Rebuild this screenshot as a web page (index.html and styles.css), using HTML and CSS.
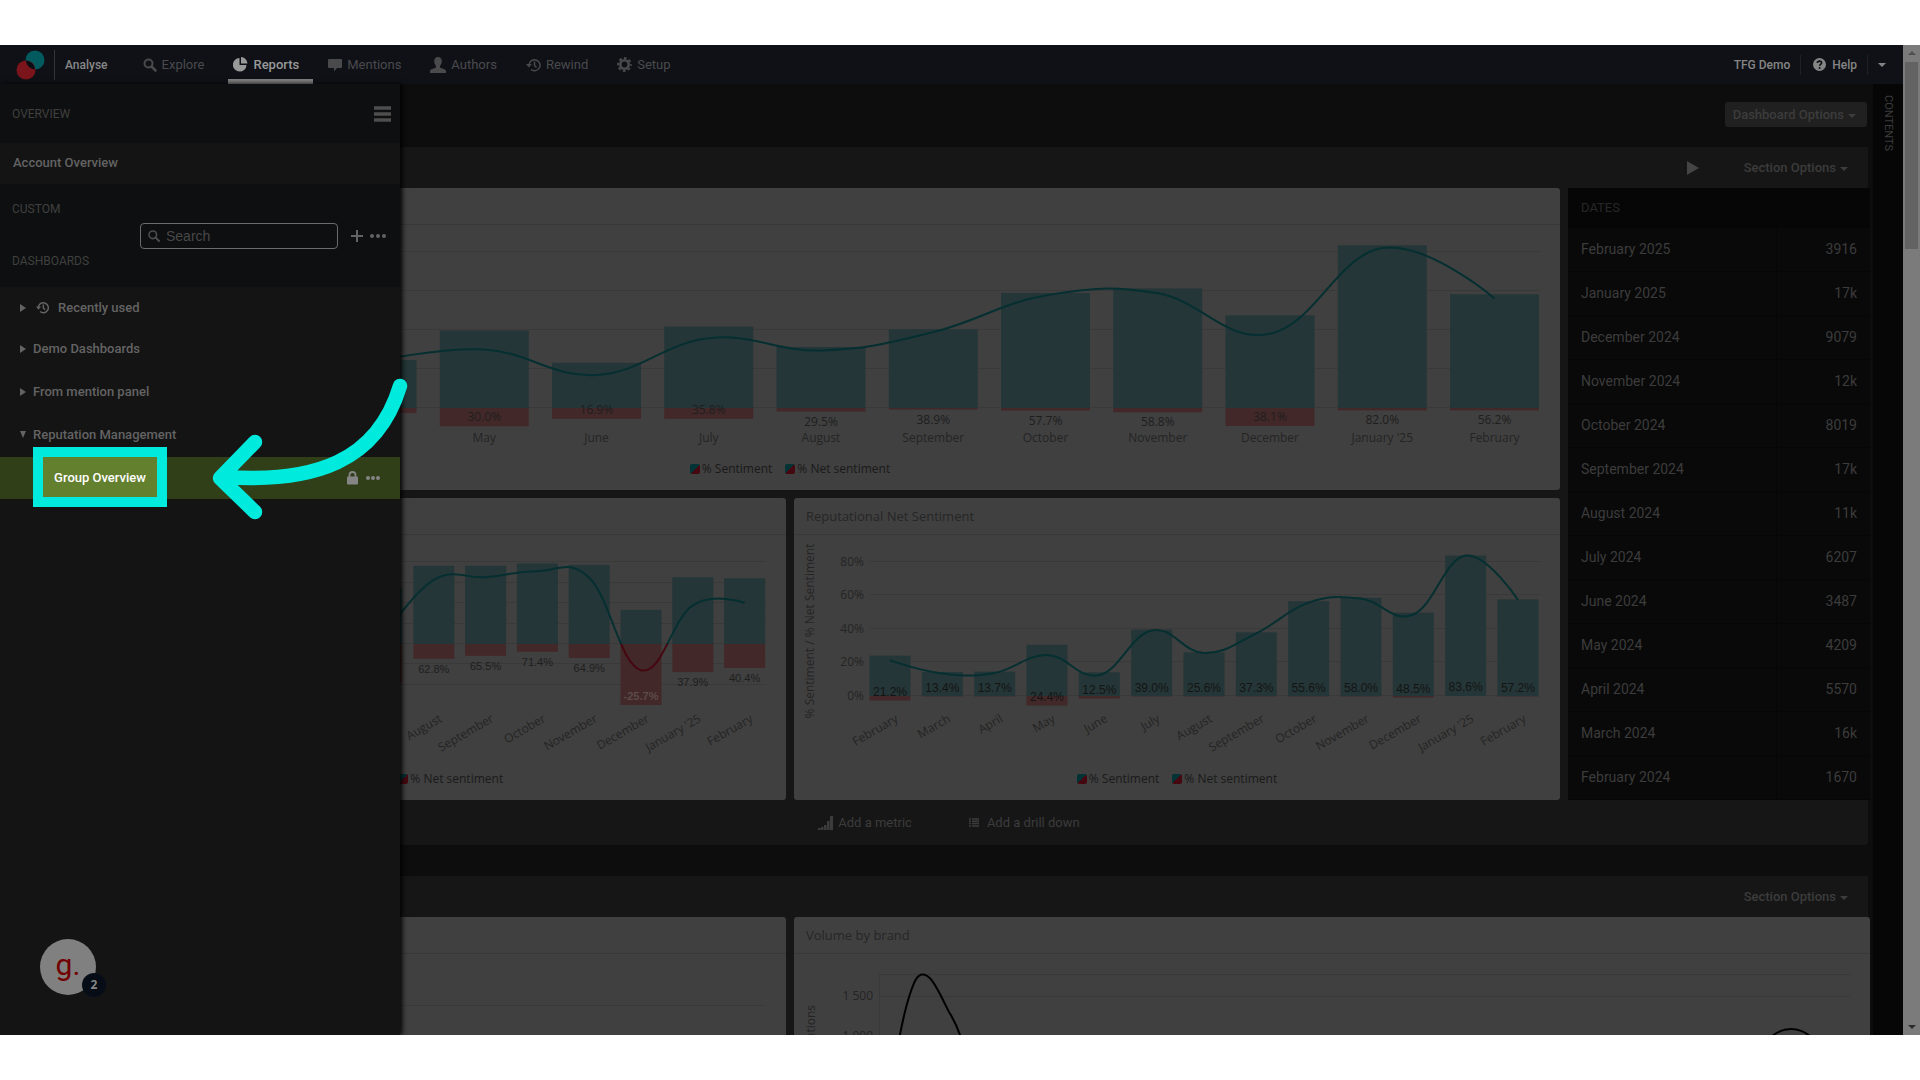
FILE: index.html
```html
<!DOCTYPE html>
<html lang="en">
<head>
    <meta charset="UTF-8">
    <title>Reports</title>
    <link rel="stylesheet" href="styles.css">
</head>
<body>

<div class="frame">
    <div class="app">
        <header class="topnav">
            <a href="#" class="logo" aria-label="Home">
                <svg width="30" height="30" viewBox="0 0 30 30">
                    <circle cx="19" cy="10" r="9.5" fill="#005a5e"/>
                    <circle cx="10" cy="20" r="9.5" fill="#7c141b"/>
                    <path d="M9.9 10.500A9.500 9.500 0 0 1 19.100 19.500A9.500 9.500 0 0 1 9.900 10.500Z" fill="#0c0d12"/>
                </svg>
            </a>
            <span class="product">Analyse</span>
            <nav class="tabs">
                <a href="#" class="tab">
                    <svg width="14" height="14" viewBox="0 0 14 14"><circle cx="5.500" cy="5.500" r="4" fill="none" stroke="currentColor" stroke-width="2"/><path d="M8.500 8.500L12.500 12.500" stroke="currentColor" stroke-width="2.500" stroke-linecap="round"/></svg>
                    Explore
                </a>
                <a href="#" class="tab active">
                    <svg width="15" height="15" viewBox="0 0 15 15"><path d="M6.500 1V8H13.500A6.800 6.800 0 1 1 6.500 1Z M8 0A7 7 0 0 1 14.500 6.500H8Z" fill="currentColor"/></svg>
                    Reports
                </a>
                <a href="#" class="tab">
                    <svg width="14" height="14" viewBox="0 0 14 14"><path d="M1 1H13Q14 1 14 2V9Q14 10 13 10H9L6 13.500V10H1Q0 10 0 9V2Q0 1 1 1Z" fill="currentColor"/></svg>
                    Mentions
                </a>
                <a href="#" class="tab">
                    <svg width="16" height="16" viewBox="0 0 16 16"><path d="M8 0C10.500 0 11.800 1.800 11.800 4.300C11.800 6.500 10.800 8 10 9V10.500C11.500 11.500 16 12 16 14.200V16H0V14.200C0 12 4.500 11.500 6 10.500V9C5.200 8 4.200 6.500 4.200 4.300C4.200 1.800 5.500 0 8 0Z" fill="currentColor"/></svg>
                    Authors
                </a>
                <a href="#" class="tab">
                    <svg width="15" height="14" viewBox="0 0 15 14"><path d="M3 7A5.500 5.500 0 1 1 5 11.500" fill="none" stroke="currentColor" stroke-width="1.500"/><path d="M0 6H5.800L2.900 9.500Z" fill="currentColor"/><path d="M8.500 3.500V7.500L10.500 9.500" fill="none" stroke="currentColor" stroke-width="1.500"/></svg>
                    Rewind
                </a>
                <a href="#" class="tab">
                    <svg width="15" height="15" viewBox="0 0 15 15"><circle cx="7.500" cy="7.500" r="4.200" fill="none" stroke="currentColor" stroke-width="2.600"/><circle cx="7.500" cy="7.500" r="6.400" fill="none" stroke="currentColor" stroke-width="2" stroke-dasharray="2.700 2.327" stroke-dashoffset="1.350"/></svg>
                    Setup
                </a>
            </nav>
            <div class="account">
                <a href="#" class="account-item">TFG Demo</a>
                <a href="#" class="account-item">
                    <svg width="13" height="13" viewBox="0 0 13 13"><circle cx="6.500" cy="6.500" r="6.500" fill="currentColor"/><path d="M4.400 5C4.400 2.400 8.600 2.500 8.600 4.900C8.600 6.300 6.600 6.400 6.600 7.700" fill="none" stroke="#0f1117" stroke-width="1.600"/><circle cx="6.600" cy="9.900" r="1" fill="#0f1117"/></svg>
                    Help
                </a>
                <button class="account-more" aria-label="More"><span class="caret"></span></button>
            </div>
        </header>

        <div class="workspace">
            <aside class="sidebar">
                <div class="side-head">
                    <span>OVERVIEW</span>
                    <button class="icon-btn burger" aria-label="Menu">
                        <svg width="17" height="16" viewBox="0 0 17 16"><path d="M0 2H17M0 8H17M0 14H17" stroke="currentColor" stroke-width="3.500"/></svg>
                    </button>
                </div>
                <a href="#" class="side-account">Account Overview</a>
                <div class="side-tools">
                    <div class="side-label">CUSTOM</div>
                    <div class="side-search">
                        <label class="search-box">
                            <svg width="12" height="12" viewBox="0 0 12 12"><circle cx="4.800" cy="4.800" r="3.800" fill="none" stroke="currentColor" stroke-width="1.600"/><path d="M7.600 7.600L11 11" stroke="currentColor" stroke-width="2" stroke-linecap="round"/></svg>
                            <input type="text" placeholder="Search" aria-label="Search">
                        </label>
                        <button class="icon-btn" aria-label="Add">
                            <svg width="12" height="12" viewBox="0 0 12 12"><path d="M6 0V12M0 6H12" stroke="currentColor" stroke-width="2"/></svg>
                        </button>
                        <button class="icon-btn" aria-label="More">
                            <svg width="16" height="4" viewBox="0 0 16 4"><circle cx="2" cy="2" r="2" fill="currentColor"/><circle cx="8" cy="2" r="2" fill="currentColor"/><circle cx="14" cy="2" r="2" fill="currentColor"/></svg>
                        </button>
                    </div>
                    <div class="side-label">DASHBOARDS</div>
                </div>
                <div class="folders">
                    <a href="#" class="folder recent">
                        <span class="arrow-right"></span>
                        <svg class="clock" width="13" height="13" viewBox="0 0 13 13"><path d="M2.300 6.500A5 5 0 1 1 4 10.500" fill="none" stroke="currentColor" stroke-width="1.500"/><path d="M0 5.500H5L2.500 8.800Z" fill="currentColor"/><path d="M7.300 3.500V7L9.200 8.800" fill="none" stroke="currentColor" stroke-width="1.400"/></svg>
                        Recently used
                    </a>
                    <a href="#" class="folder"><span class="arrow-right"></span>Demo Dashboards</a>
                    <a href="#" class="folder"><span class="arrow-right"></span>From mention panel</a>
                    <a href="#" class="folder"><span class="arrow-down"></span>Reputation Management</a>
                </div>
                <div class="dashboard-row">
                    <a href="#" class="spotlight">Group Overview</a>
                    <div class="row-actions">
                        <svg width="11" height="14" viewBox="0 0 11 14"><path d="M2.500 6V4A3 3 0 0 1 8.500 4V6" fill="none" stroke="currentColor" stroke-width="1.800"/><rect y="5.500" width="11" height="8" rx="1" fill="currentColor"/></svg>
                        <button class="icon-btn" aria-label="More">
                            <svg width="14" height="4" viewBox="0 0 14 4"><circle cx="2" cy="2" r="2" fill="currentColor"/><circle cx="7" cy="2" r="2" fill="currentColor"/><circle cx="12" cy="2" r="2" fill="currentColor"/></svg>
                        </button>
                    </div>
                    <svg class="pointer" width="200" height="150" viewBox="210 375 200 150">
                        <path d="M400 386C377 462 314 483 225 477M255 442L220 478L255 512" fill="none" stroke="#00ebdd" stroke-width="14.500" stroke-linecap="round" stroke-linejoin="round"/>
                    </svg>
                </div>
                <button class="guide">g.<span class="guide-count">2</span></button>
            </aside>

            <main class="main">
                <div class="dash-bar">
                    <button class="dash-options">Dashboard Options<span class="caret"></span></button>
                </div>

                <section class="section">
                    <div class="section-bar">
                        <button class="icon-btn play" aria-label="Play"><span></span></button>
                        <button class="section-options">Section Options<span class="caret"></span></button>
                    </div>
                    <div class="section-grid">
                        <div class="cards">
                            <article class="card wide">
                                <h2></h2>
                                <svg class="chart" id="sentimentChart" viewBox="0 0 1540 232"></svg>
                                <div class="legend"><span>% Sentiment</span><span>% Net sentiment</span></div>
                            </article>
                            <article class="card">
                                <h2></h2>
                                <svg class="chart" id="brandChart" viewBox="0 0 766 232"></svg>
                                <div class="legend"><span>% Sentiment</span><span>% Net sentiment</span></div>
                            </article>
                            <article class="card">
                                <h2>Reputational Net Sentiment</h2>
                                <svg class="chart" id="reputationChart" viewBox="0 0 766 232"></svg>
                                <div class="legend"><span>% Sentiment</span><span>% Net sentiment</span></div>
                            </article>
                        </div>
                        <table class="dates">
                            <thead><tr><th colspan="2">DATES</th></tr></thead>
                            <tbody>
                                <tr><td>February 2025</td><td>3916</td></tr>
                                <tr><td>January 2025</td><td>17k</td></tr>
                                <tr><td>December 2024</td><td>9079</td></tr>
                                <tr><td>November 2024</td><td>12k</td></tr>
                                <tr><td>October 2024</td><td>8019</td></tr>
                                <tr><td>September 2024</td><td>17k</td></tr>
                                <tr><td>August 2024</td><td>11k</td></tr>
                                <tr><td>July 2024</td><td>6207</td></tr>
                                <tr><td>June 2024</td><td>3487</td></tr>
                                <tr><td>May 2024</td><td>4209</td></tr>
                                <tr><td>April 2024</td><td>5570</td></tr>
                                <tr><td>March 2024</td><td>16k</td></tr>
                                <tr><td>February 2024</td><td>1670</td></tr>
                            </tbody>
                        </table>
                    </div>
                    <div class="section-foot">
                        <button class="add">
                            <svg width="15" height="14" viewBox="0 0 15 14"><path d="M0 12H2.500V14H0ZM3 11H5.500V14H3ZM6 9H8.500V14H6ZM9 5H11.500V14H9ZM12 0H15V14H12Z" fill="currentColor"/></svg>
                            Add a metric
                        </button>
                        <button class="add drill">
                            <svg width="10" height="9" viewBox="0 0 10 9"><path d="M0 1H2M3 1H10M0 3.300H2M3 3.300H10M0 5.600H2M3 5.600H10M0 8H2M3 8H10" stroke="currentColor" stroke-width="1.500"/></svg>
                            Add a drill down
                        </button>
                    </div>
                </section>

                <section class="section">
                    <div class="section-bar">
                        <button class="section-options">Section Options<span class="caret"></span></button>
                    </div>
                    <div class="volume-grid">
                        <article class="card">
                            <h2></h2>
                            <svg class="chart" viewBox="0 0 766 232"><path class="grid" d="M60 51.500H746"/></svg>
                        </article>
                        <article class="card">
                            <h2>Volume by brand</h2>
                            <svg class="chart" viewBox="0 0 1076 232">
                                <path class="grid" d="M85.500 20.500H1056M85.500 42.500H1056M85.500 20.500V200"/>
                                <text class="axis" x="79" y="46" text-anchor="end">1 500</text>
                                <text class="axis" x="79" y="86" text-anchor="end">1 000</text>
                                <text class="axis" transform="translate(21 51) rotate(-90)" text-anchor="end">Mentions</text>
                                <path class="volume" d="M98 120L105.700 82C109 65 114 46 116 40C120 28 123 20.500 128.500 20.500C136 20.500 141 31 146 40L155 58C160 66 163 72 166 81L174 105"/>
                                <path class="volume" d="M966 96C984 68 1010 68 1028 96"/>
                            </svg>
                        </article>
                    </div>
                </section>
            </main>
            <button class="contents">CONTENTS</button>
        </div>
    </div>
    <div class="scrollbar">
        <span class="scroll-up"></span>
        <span class="scroll-thumb"></span>
        <span class="scroll-down"></span>
    </div>
</div>

<script src="charts.js"></script>
</body>
</html>
```
FILE: styles.css
```css
* {
    box-sizing: border-box;
}
body {
    margin: 0;
    padding: 45px 0;
    background: #fff;
    font-family: Roboto, sans-serif;
    font-size: 14px;
    color: #3c3c3c;
}
a {
    color: inherit;
    text-decoration: none;
}
button {
    font: inherit;
    color: inherit;
    background: none;
    border: none;
    padding: 0;
    cursor: pointer;
}
svg {
    display: block;
    flex: none;
}
.frame {
    display: flex;
    height: calc(100vh - 90px);
    overflow: hidden;
    background: #0d0d0d;
}
.app {
    flex: 1;
    min-width: 0;
    display: flex;
    flex-direction: column;
}
.icon-btn {
    display: flex;
}
.caret {
    display: inline-block;
    border: 4px solid transparent;
    border-top-color: currentColor;
    border-bottom: 0;
    margin-left: 4px;
    vertical-align: middle;
}

/* top navigation */
.topnav {
    display: flex;
    align-items: center;
    height: 39px;
    flex: none;
    background: #0f1117;
    font-size: 13px;
}
.logo {
    padding: 0 8px 0 16px;
    border-right: 1px solid #33343a;
}
.product {
    padding: 0 30px 0 10px;
    color: #878787;
    font-size: 12px;
    font-weight: 500;
}
.tabs {
    display: flex;
    gap: 10px;
    height: 100%;
}
.tab {
    display: flex;
    align-items: center;
    gap: 5px;
    padding: 5px 14px 0 5px;
    border-bottom: 5px solid transparent;
    color: #4a4a4c;
}
.tab.active {
    color: #999;
    font-weight: 500;
    border-color: #808080;
}
.account {
    display: flex;
    align-items: center;
    margin-left: auto;
    color: #858585;
    font-size: 12px;
    font-weight: 500;
}
.account-item {
    display: flex;
    align-items: center;
    gap: 6px;
    height: 20px;
    padding: 0 10px 0 12px;
    border-right: 1px solid #1e2026;
}
.account-more {
    padding: 0 17px 0 6px;
}

/* sidebar */
.workspace {
    flex: 1;
    min-height: 0;
    display: flex;
    position: relative;
}
.sidebar {
    position: absolute;
    top: 0;
    bottom: 0;
    left: 0;
    z-index: 2;
    width: 400px;
    background: #141414;
    color: #636363;
    box-shadow: 2px 0 5px #000;
}
.side-head {
    display: flex;
    align-items: center;
    justify-content: space-between;
    height: 59px;
    padding: 0 9px 0 12px;
    background: #0d0f11;
    color: #40403e;
    font-size: 12px;
}
.burger {
    color: #4e4e4e;
}
.side-account {
    display: flex;
    align-items: center;
    height: 41px;
    padding: 0 0 2px 13px;
    font-size: 13px;
    font-weight: 500;
}
.side-tools {
    height: 103px;
    padding: 18px 14px 0 12px;
    background: #0d0f11;
}
.side-label {
    height: 15px;
    line-height: 15px;
    font-size: 12px;
    color: #40403e;
}
.side-search {
    display: flex;
    align-items: center;
    justify-content: flex-end;
    gap: 7px;
    margin: 6px 0 5px;
    height: 26px;
}
.search-box {
    display: flex;
    align-items: center;
    gap: 6px;
    width: 198px;
    height: 26px;
    margin-right: 6px;
    padding-left: 7px;
    border: 1px solid #6c6c6c;
    border-radius: 4px;
    color: #4c4c4c;
}
.search-box input {
    width: 100%;
    min-width: 0;
    padding: 0;
    border: none;
    outline: none;
    background: none;
    color: #636363;
    font: 14px "Liberation Sans", sans-serif;
}
.search-box input::placeholder {
    color: #484848;
}
.folder {
    display: flex;
    align-items: center;
    gap: 7px;
    height: 43px;
    padding: 0 0 2px 20px;
    font-size: 13px;
    font-weight: 500;
}
.recent {
    height: 41px;
    padding-bottom: 0;
}
.clock {
    margin: 0 2px 0 3px;
}
.arrow-right {
    border: 4px solid transparent;
    border-left: 6px solid currentColor;
    border-right: 0;
}
.arrow-down {
    border: 3px solid transparent;
    border-top: 7px solid currentColor;
    border-bottom: 0;
}
.dashboard-row {
    position: relative;
    display: flex;
    justify-content: space-between;
    height: 42px;
    padding: 0 20px 0 43px;
    background: #313f18;
}
.spotlight {
    width: 114px;
    height: 40px;
    line-height: 42px;
    background: #63802f;
    outline: 10px solid #00ebdd;
    color: #fff;
    font-size: 13px;
    font-weight: 500;
    text-align: center;
}
.row-actions {
    display: flex;
    align-items: center;
    gap: 8px;
    color: #858585;
}
.pointer {
    position: absolute;
    left: 210px;
    bottom: -26px;
}
.guide {
    position: absolute;
    left: 40px;
    bottom: 40px;
    width: 56px;
    height: 56px;
    padding-bottom: 6px;
    border-radius: 50%;
    background: #808080;
    color: #720000;
    font: 30px Roboto, sans-serif;
}
.guide-count {
    position: absolute;
    left: 42px;
    bottom: -2px;
    width: 24px;
    height: 24px;
    border-radius: 50%;
    background: #070d17;
    color: #858585;
    font: bold 12px/24px "Noto Sans", sans-serif;
}

/* dashboard */
.main {
    flex: 1;
    min-width: 0;
    padding: 0 5px 0 12px;
}
.dash-bar {
    display: flex;
    align-items: center;
    justify-content: flex-end;
    height: 63px;
    padding: 0 1px 2px 0;
}
.dash-options {
    height: 25px;
    padding: 0 11px 0 8px;
    border-radius: 3px;
    background: #202020;
    font-size: 13px;
    font-weight: 500;
}
.section {
    margin-bottom: 31px;
    padding-left: 8px;
    background: #161616;
    border-radius: 0 0 4px 4px;
}
.section-bar {
    display: flex;
    align-items: center;
    justify-content: flex-end;
    height: 41px;
    padding-right: 20px;
}
.play {
    margin-right: 45px;
}
.play span {
    border: 7px solid transparent;
    border-left: 12px solid #444;
    border-right: 0;
}
.section-options {
    font-size: 13px;
    font-weight: 500;
}
.section-grid {
    display: flex;
    gap: 8px;
    margin-right: -2px;
}
.cards {
    flex: 1;
    min-width: 0;
    display: grid;
    grid-template-columns: 1fr 1fr;
    gap: 8px;
}
.volume-grid {
    display: grid;
    grid-template-columns: 766fr 1076fr;
    gap: 8px;
    margin-right: -2px;
}
.card {
    min-height: 302px;
    min-width: 0;
    background: #404040;
    border-radius: 3px;
}
.wide {
    grid-column: span 2;
}
.card h2 {
    height: 37px;
    margin: 0;
    padding-left: 12px;
    border-bottom: 1px solid #383838;
    font: 13px/37px "Open Sans", sans-serif;
    color: #262626;
}
.chart {
    width: 100%;
    height: auto;
    font: 12px "Open Sans", sans-serif;
}
.legend {
    display: flex;
    justify-content: center;
    gap: 13px;
    font: 12px/24px "Open Sans", sans-serif;
    color: #1a1a1a;
}
.legend span {
    display: flex;
    align-items: center;
    gap: 2px;
}
.legend span::before {
    content: "";
    width: 10px;
    height: 10px;
    border-radius: 2px;
    background: linear-gradient(135deg, #003335 50%, #450810 50%);
}
.grid {
    fill: none;
    stroke: #393939;
}
.bar-pos {
    fill: #243637;
}
.bar-neg {
    fill: #432829;
}
.line-pos, .line-neg {
    fill: none;
    stroke: #052f30;
    stroke-width: 2;
}
.line-neg {
    stroke: #450810;
}
.axis {
    fill: #242424;
}
.value {
    fill: #1e1e1e;
}
.value.small {
    font: 11px "Liberation Sans", sans-serif;
}
.value.plain {
    fill: #141414;
    font: 12px "Liberation Sans", sans-serif;
}
.value.negative {
    fill: #5c4a4a;
    font-weight: bold;
}
.volume {
    fill: none;
    stroke: #000;
    stroke-width: 2;
}
.dates {
    width: 302px;
    height: 612px;
    border-collapse: collapse;
    background: #090909;
    border-bottom: 1px solid #060606;
}
.dates th {
    height: 39px;
    padding: 0 13px;
    background: #060606;
    text-align: left;
    font-weight: normal;
    font-size: 13px;
    color: #262626;
}
.dates td {
    height: 44px;
    padding: 0 13px;
    border-top: 1px solid #060606;
}
.dates td + td {
    width: 94px;
    border-left: 1px solid #060606;
    text-align: right;
}
.section-foot {
    display: flex;
    align-items: center;
    justify-content: center;
    gap: 57px;
    height: 45px;
    padding-left: 10px;
}
.add {
    display: flex;
    align-items: center;
    gap: 5px;
    font-size: 13px;
}
.drill {
    gap: 8px;
}
.contents {
    width: 30px;
    padding: 11px 0 0;
    background: #060606;
    writing-mode: vertical-rl;
    text-align: left;
    font-size: 11px;
}

/* scrollbar */
.scrollbar {
    display: flex;
    flex-direction: column;
    align-items: center;
    width: 17px;
    padding: 6px 0;
    background: #7b7b7b;
}
.scroll-up, .scroll-down {
    border: 4px solid transparent;
    border-bottom-color: #505050;
    border-top: 0;
}
.scroll-down {
    margin-top: auto;
    border-top: 4px solid #2c2c2c;
    border-bottom: 0;
}
.scroll-thumb {
    width: 13px;
    height: 187px;
    margin-top: 7px;
    background: #636363;
}
```
FILE: charts.js
```js
// rows: [month, positive %, negative %, net %]
const charts = {
    sentimentChart: {
        zero: 183, scale: 1.95, first: 352, step: 112.25, bar: 89,
        grid: [0, 20, 40, 60, 80], left: 70, right: 1520, insideFrom: 5,
        rows: [
            ['', 24.6, 2.6, 23.5], ['May', 39.7, 9.4, 30.0], ['June', 23.2, 5.6, 16.9],
            ['July', 41.7, 5.6, 35.8], ['August', 31.3, 1.8, 29.5], ['September', 40.4, 0.8, 38.9],
            ['October', 59, 1.3, 57.7], ['November', 61.3, 2.2, 58.8], ['December', 47.5, 9.2, 38.1],
            ["January '25", 83.4, 1.2, 82.0], ['February', 58.3, 1.2, 56.2]
        ]
    },
    brandChart: {
        zero: 109, scale: 1.02, first: 362, step: 51.8, bar: 41,
        grid: [-40, -20, 0, 20, 40, 60, 80], left: 70, right: 746, insideFrom: 40,
        rotate: true, font: 'small',
        rows: [
            ['', 54.6, 37.5, 5], ['August', 76.7, 14.5, 62.8], ['September', 76.7, 11.6, 65.5],
            ['October', 79, 7.6, 71.4], ['November', 77.5, 13.7, 64.9], ['December', 33.5, 59.8, -25.7],
            ["January '25", 65.4, 27.5, 37.9], ['February', 64.4, 23.5, 40.4]
        ]
    },
    reputationChart: {
        zero: 161, scale: 1.68, first: 96, step: 52.33, bar: 41,
        grid: [0, 20, 40, 60, 80], left: 76, right: 746, insideFrom: 0,
        rotate: true, font: 'plain', axisTitle: '% Sentiment / % Net Sentiment',
        rows: [
            ['February', 24, 2.7, 21.2], ['March', 14.3, 0.3, 13.4], ['April', 14.5, 0.3, 13.7],
            ['May', 30.5, 5.7, 24.4], ['June', 14.1, 1.5, 12.5], ['July', 39.5, 0.3, 39.0],
            ['August', 26, 0.3, 25.6], ['September', 37.9, 0.3, 37.3], ['October', 56.4, 0.3, 55.6],
            ['November', 58.5, 0.3, 58.0], ['December', 49.6, 0.9, 48.5], ["January '25", 83.6, 0, 83.6],
            ['February', 57.5, 0.3, 57.2]
        ]
    }
};

// smooth curve, each point's handles follow the slope between its neighbours
function spline(pts) {
    let d = `M${pts[0].x} ${pts[0].y}`;
    let out = pts[0];
    for (let i = 1; i < pts.length; i++) {
        const p = pts[i], last = pts[i - 1], next = pts[i + 1];
        if (!next) {
            d += `C${out.x} ${out.y} ${p.x} ${p.y} ${p.x} ${p.y}`;
            break;
        }
        const slope = (next.y - last.y) / (next.x - last.x);
        const dx = (next.x - p.x) / 2.5;
        d += `C${out.x} ${out.y} ${p.x - dx} ${p.y - slope * dx} ${p.x} ${p.y}`;
        out = {x: p.x + dx, y: p.y + slope * dx};
    }
    return d;
}

function drawChart(id, c) {
    const y = v => c.zero - v * c.scale;
    let bars = '', labels = '';
    const pts = [];

    c.rows.forEach(([month, pos, neg, net], i) => {
        const x = c.first + i * c.step;
        const bottom = y(-neg);
        pts.push({x, y: y(net)});
        bars += `<rect class="bar-pos" x="${x - c.bar / 2}" y="${y(pos)}" width="${c.bar}" height="${pos * c.scale}"/>`;
        bars += `<rect class="bar-neg" x="${x - c.bar / 2}" y="${c.zero}" width="${c.bar}" height="${neg * c.scale}"/>`;
        if (!month) return;
        const inside = neg >= c.insideFrom;
        const cls = `value ${c.font || ''} ${net < 0 ? 'negative' : ''}`;
        labels += `<text class="${cls}" x="${x}" y="${bottom + (inside ? -5 : 14)}" text-anchor="middle">${net.toFixed(1)}%</text>`;
        labels += c.rotate
            ? `<text class="axis" transform="translate(${x + 9} 186) rotate(-30)" text-anchor="end">${month}</text>`
            : `<text class="axis" x="${x}" y="217" text-anchor="middle">${month}</text>`;
    });

    const grid = c.grid.map(v => `<path class="grid" d="M${c.left} ${Math.round(y(v)) - 0.5}H${c.right}"/>`).join('');
    if (c.axisTitle) {
        c.grid.forEach(v => {
            labels += `<text class="axis" x="70" y="${y(v) + 4}" text-anchor="end">${v}%</text>`;
        });
        labels += `<text class="axis" transform="translate(20 96) rotate(-90)" text-anchor="middle">${c.axisTitle}</text>`;
    }

    const d = spline(pts);
    document.getElementById(id).innerHTML = `
        <clipPath id="${id}Up"><rect width="1540" height="${c.zero}"/></clipPath>
        <clipPath id="${id}Down"><rect y="${c.zero}" width="1540" height="200"/></clipPath>
        ${grid}${bars}
        <path class="line-pos" d="${d}" clip-path="url(#${id}Up)"/>
        <path class="line-neg" d="${d}" clip-path="url(#${id}Down)"/>
        ${labels}`;
}

Object.entries(charts).forEach(([id, c]) => drawChart(id, c));
```
